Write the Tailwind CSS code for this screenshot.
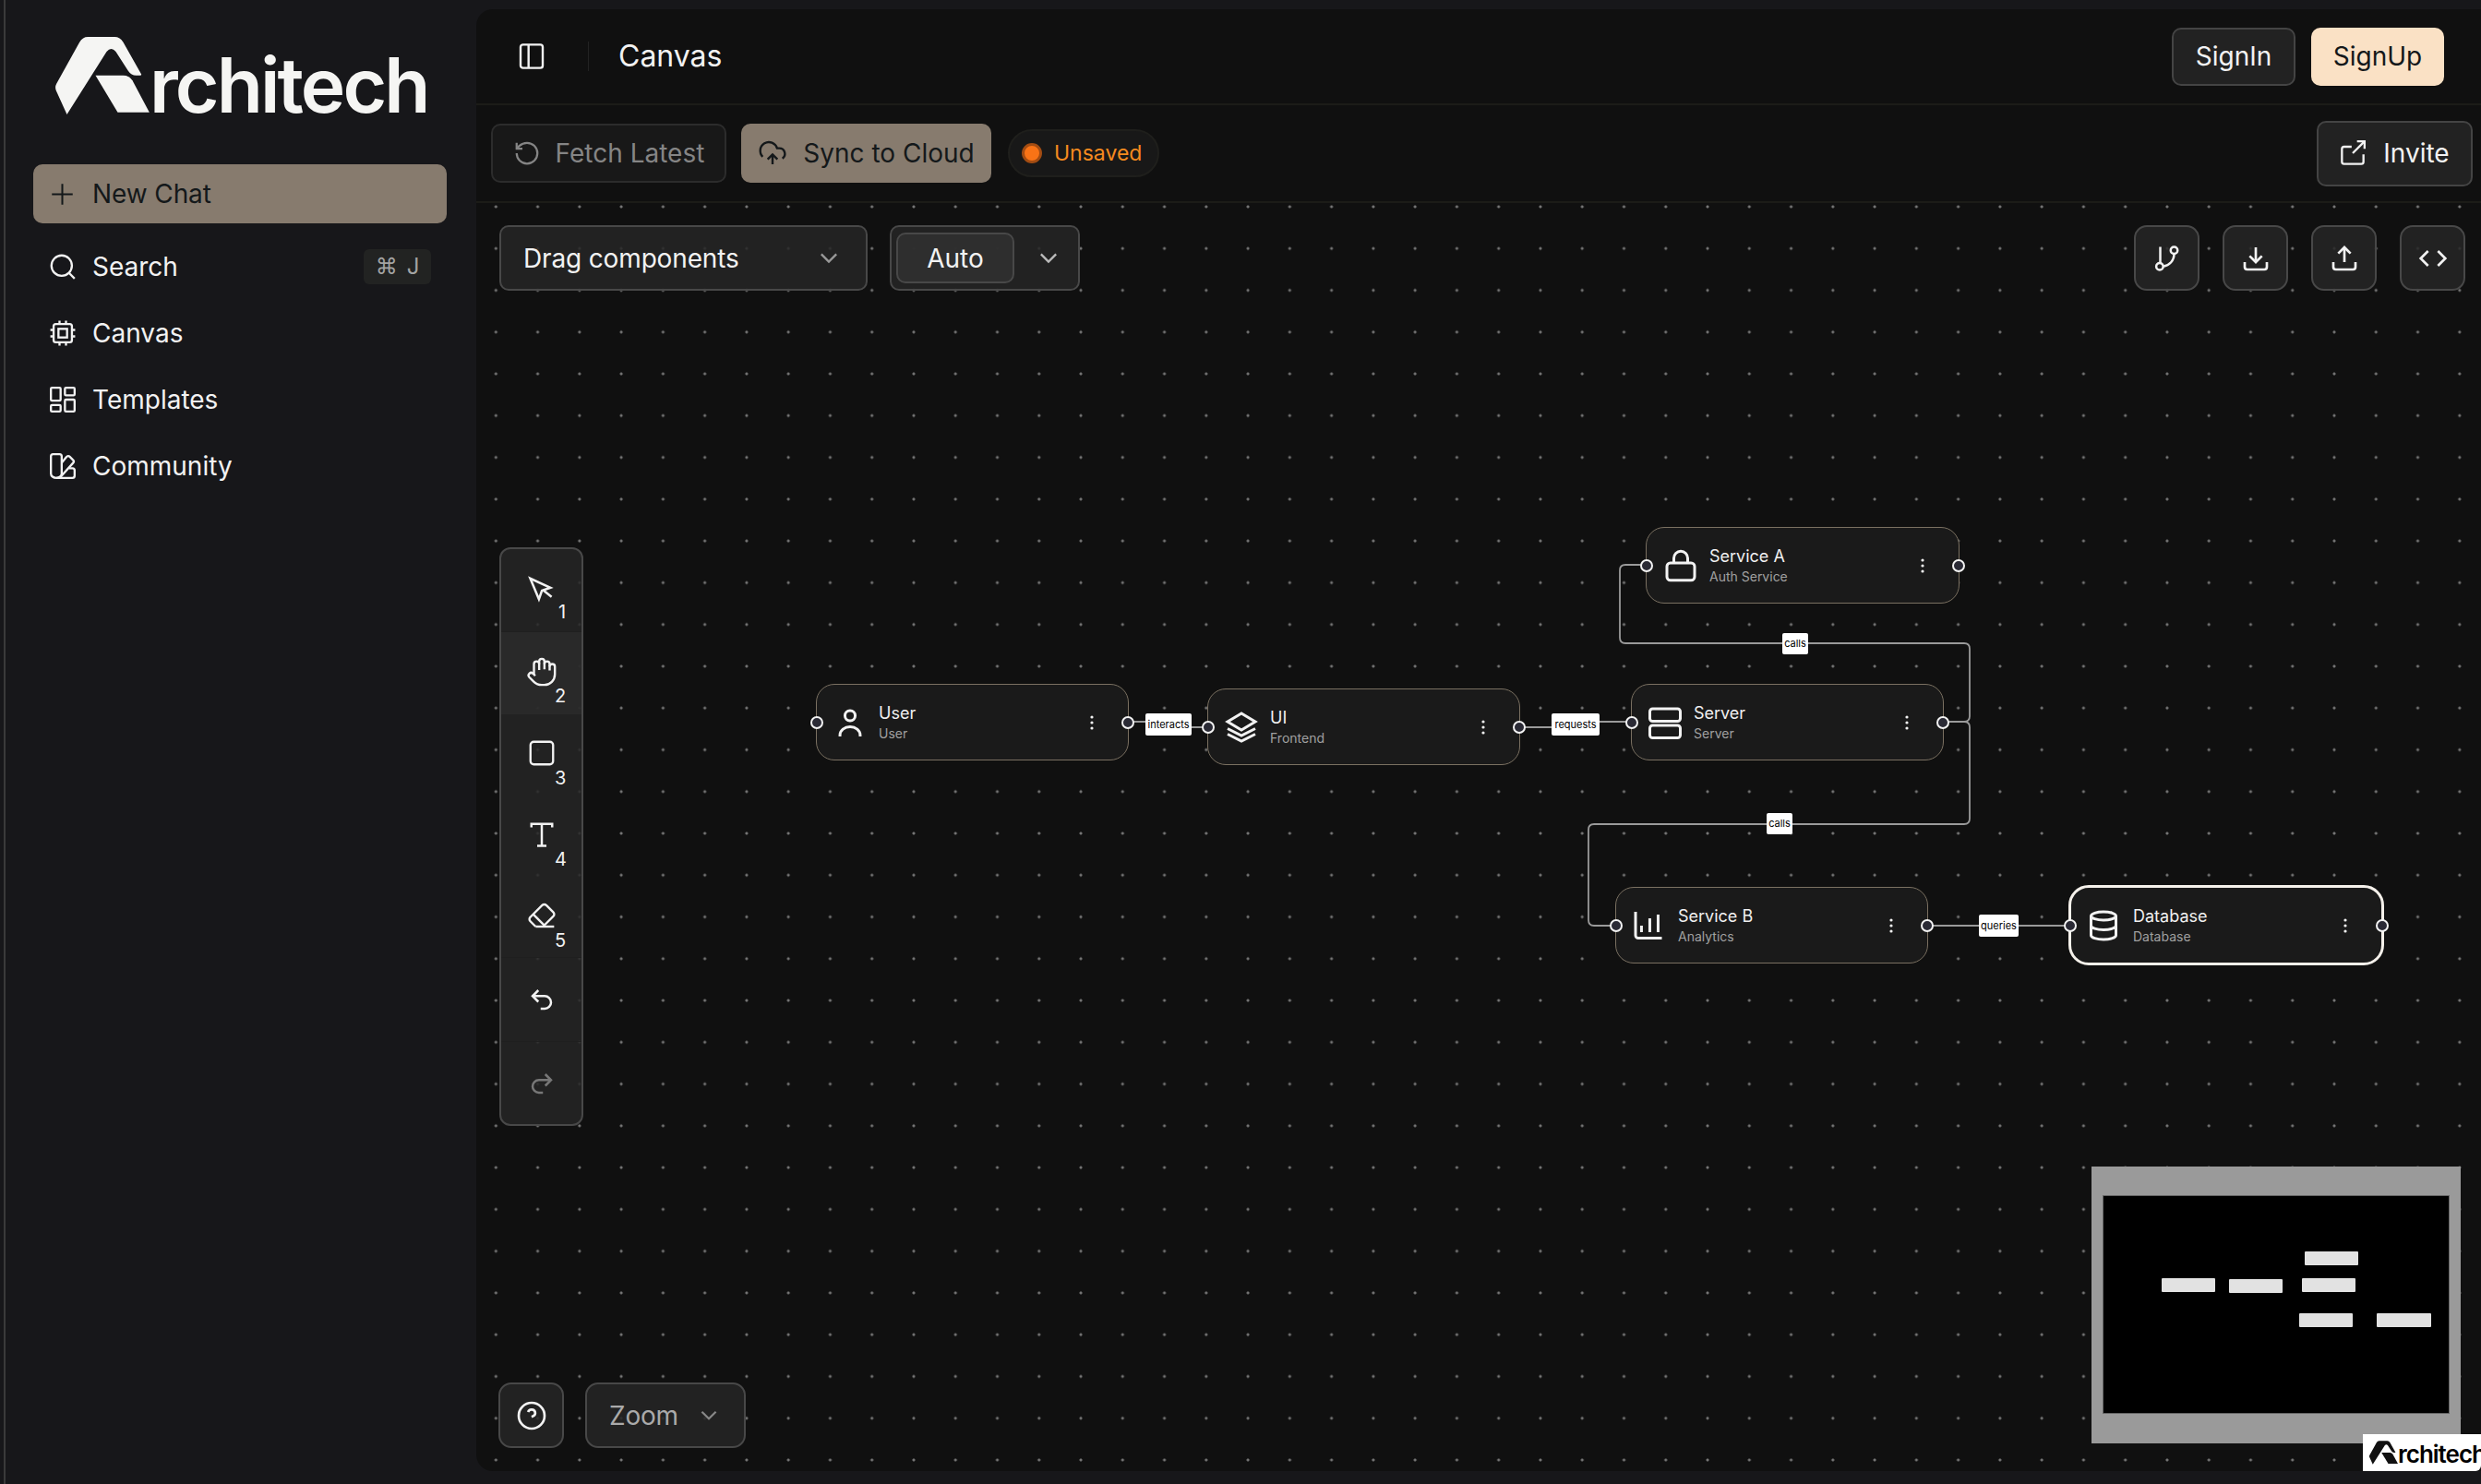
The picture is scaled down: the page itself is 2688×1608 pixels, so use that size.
<!DOCTYPE html>
<html>
<head>
<meta charset="utf-8">
<script src="https://cdn.jsdelivr.net/npm/@tailwindcss/browser@4"></script>
</head>
<body class="bg-[#17171a]">
<div class="flex w-[2688px] h-[1608px] overflow-hidden bg-[#17171a] font-[family-name:Inter]">
  <div class="w-[4px] shrink-0"></div>
  <div class="w-[2px] shrink-0 bg-[#3a3a3a]"></div>
  <!-- Sidebar -->
  <aside class="w-[510px] shrink-0 flex flex-col pl-[30px] pr-[32px] text-[#f2f2f2]">
    <div class="h-[178px] flex items-start pl-[24px] pt-[40px] shrink-0">
      <svg class="shrink-0" width="102" height="84" viewBox="30 30 305 252" fill="#f5f5f3"><path d="M67 282 L32 205 Q27 193 33 182 L108 47 Q118 30 135 30 H222 Q240 30 250 47 L308 150 Q311 155 305 155 H292 Q276 155 266 140 L226 78 Q211 60 196 78 Z"/><path d="M160 155 H250 Q270 155 280 172 L335 275 H232 Z"/></svg>
      <span class="text-[82px] leading-[82px] font-semibold tracking-[-2.9px] text-[#f5f5f3] mt-[12px]">rchitech</span>
    </div>
    <button class="h-[64px] flex items-center bg-[#877b6e] rounded-[10px] pl-[18px] gap-[19px] text-[#14181a] text-[28px] tracking-[-0.1px]">
      <svg class="w-[27px] h-[27px]" viewBox="0 0 24 24" fill="none" stroke="currentColor" stroke-width="1.8"><path d="M2 12h20M12 2v20"/></svg>
      New Chat
    </button>
    <nav class="flex flex-col mt-[11px]">
      <div class="h-[72px] flex items-center pl-[18px] gap-[18px] text-[28px]">
        <svg class="w-[28px] h-[28px]" viewBox="0 0 24 24" fill="none" stroke="currentColor" stroke-width="2"><circle cx="11" cy="11" r="9.500"/><path d="m23 23-5-5"/></svg>
        <span class="flex-1">Search</span>
        <span class="w-[73px] h-[38px] mr-[17px] rounded-[6px] bg-[#222322] text-[#a3a3a3] text-[24px] flex items-center justify-center gap-[10px] font-[family-name:'DejaVu_Sans']"><span>⌘</span><span class="font-[family-name:Inter]">J</span></span>
      </div>
      <div class="h-[72px] flex items-center pl-[18px] gap-[18px] text-[28px]">
        <svg class="w-[28px] h-[28px]" viewBox="0 0 24 24" fill="none" stroke="currentColor" stroke-width="2"><rect x="3.500" y="3.500" width="17" height="17" rx="2"/><rect x="8" y="8" width="8" height="8"/><path d="M15 0.500v2.500M15 21v2.500M0.500 15h2.500M0.500 9h2.500M21 15h2.500M21 9h2.500M9 0.500v2.500M9 21v2.500"/></svg>
        Canvas
      </div>
      <div class="h-[72px] flex items-center pl-[18px] gap-[18px] text-[28px]">
        <svg class="w-[28px] h-[28px]" viewBox="0 0 24 24" fill="none" stroke="currentColor" stroke-width="2"><rect x="1" y="1" width="9" height="12" rx="1"/><rect x="14" y="1" width="9" height="7" rx="1"/><rect x="14" y="12" width="9" height="11" rx="1"/><rect x="1" y="17" width="9" height="6" rx="1"/></svg>
        Templates
      </div>
      <div class="h-[72px] flex items-center pl-[18px] gap-[18px] text-[28px]">
        <svg class="w-[28px] h-[28px]" viewBox="0 0 24 24" fill="none" stroke="currentColor" stroke-width="2"><path d="M11 19a5 4 0 0 1-10 0V3a2 2 0 0 1 2-2h6a2 2 0 0 1 2 2Z"/><path d="M18 14h3a2 2 0 0 1 2 2v5a2 2 0 0 1-2 2H6"/><path d="m11 9 4.500-5.500a2 2 0 0 1 3-.2l3 3a2 2 0 0 1 .1 2.800L10 22"/><path d="M6 19h.01"/></svg>
        Community
      </div>
    </nav>
  </aside>

  <!-- Main -->
  <main class="flex-1 flex flex-col mt-[10px] mb-[14px] bg-[#101010] rounded-l-[18px] overflow-hidden text-[#f2f2f2]">
    <header class="h-[104px] shrink-0 border-b-2 border-[#1c1c18] flex items-center pl-[44px] pr-[40px]">
      <svg class="w-[32px] h-[32px]" viewBox="0 0 24 24" fill="none" stroke="currentColor" stroke-width="1.8"><rect x="3" y="2.500" width="18" height="19" rx="2"/><path d="M9.500 2.500v19"/></svg>
      <div class="w-[1px] h-[32px] bg-[#222] ml-[45px] mr-[32px]"></div>
      <span class="text-[32px] flex-1">Canvas</span>
      <button class="w-[134px] h-[63px] rounded-[10px] border-2 border-[#444] bg-[#222] text-[28px] mr-[17px]">SignIn</button>
      <button class="w-[144px] h-[63px] rounded-[10px] bg-[#fae1c5] text-[#14181a] text-[28px]">SignUp</button>
    </header>
    <div class="h-[106px] shrink-0 border-b-2 border-[#1c1c18] flex items-center pl-[16px] pr-[9px]">
      <button class="w-[255px] h-[64px] rounded-[10px] border-2 border-[#2c2c2c] bg-[#181818] text-[#858585] text-[28px] flex items-center justify-center gap-[16px]">
        <svg class="w-[30px] h-[30px]" viewBox="0 0 24 24" fill="none" stroke="currentColor" stroke-width="1.8"><path d="M3 12a9 9 0 1 0 9-9 9.750 9.750 0 0 0-6.740 2.740L3 8"/><path d="M3 3v5h5"/></svg>
        Fetch Latest
      </button>
      <button class="w-[271px] h-[64px] rounded-[10px] bg-[#877b6e] text-[#14181a] text-[28px] ml-[16px] flex items-center justify-center gap-[17px]">
        <svg class="w-[32px] h-[32px]" viewBox="0 0 24 24" fill="none" stroke="currentColor" stroke-width="1.8"><path d="M12 13v8"/><path d="M4 14.899A7 7 0 1 1 15.710 8h1.790a4.500 4.500 0 0 1 2.500 8.242"/><path d="m8 17 4-4 4 4"/></svg>
        Sync to Cloud
      </button>
      <div class="w-[164px] h-[52px] rounded-full border-2 border-[#1f1f1c] bg-[#181818] ml-[18px] flex items-center pl-[13px] gap-[13px] text-[#f58a1f] text-[23px]">
        <span class="w-[22px] h-[22px] rounded-full bg-[#f97316] border-[3px] border-[#a34c12]"></span>Unsaved
      </div>
      <div class="flex-1"></div>
      <button class="w-[169px] h-[71px] rounded-[10px] border-2 border-[#444] bg-[#222] text-[28px] flex items-center justify-center gap-[19px]">
        <svg class="w-[28px] h-[28px]" viewBox="0 0 24 24" fill="none" stroke="currentColor" stroke-width="2"><path d="M22 13v7a2 2 0 0 1-2 2H4a2 2 0 0 1-2-2V8a2 2 0 0 1 2-2h7"/><path d="m23 1-11 11"/><path d="M16 1h7v7"/></svg>
        Invite
      </button>
    </div>

    <section class="relative flex-1 bg-[radial-gradient(circle,#777_1.5px,transparent_1.6px)] bg-[size:45.28px_45.28px] bg-[position:-1.34px_-18.64px]">
      <!-- top-left controls -->
      <div class="absolute left-[25px] top-[24px] flex gap-[24px]">
        <button class="w-[399px] h-[71px] rounded-[10px] border-2 border-[#484848] bg-[#262626]/85 text-[28px] tracking-[-0.15px] flex items-center justify-between pl-[24px] pr-[26px]">
          Drag components
          <svg class="w-[28px] h-[28px] text-[#999]" viewBox="0 0 24 24" fill="none" stroke="currentColor" stroke-width="2"><path d="m5 8 7 7 7-7"/></svg>
        </button>
        <div class="w-[206px] h-[71px] rounded-[10px] border-2 border-[#484848] bg-[#262626]/85 flex items-center pl-[5px] pr-[18px] justify-between">
          <span class="w-[128px] h-[55px] rounded-[10px] border-2 border-[#484848] bg-[#303030]/85 text-[28px] flex items-center justify-center">Auto</span>
          <svg class="w-[28px] h-[28px] text-[#bbb]" viewBox="0 0 24 24" fill="none" stroke="currentColor" stroke-width="2"><path d="m5 8 7 7 7-7"/></svg>
        </div>
      </div>
      <!-- top-right tools -->
      <div class="absolute right-[17px] top-[24px] flex gap-[25px]">
        <button class="w-[71px] h-[71px] rounded-[14px] border-2 border-[#484848] bg-[#262626]/85 flex items-center justify-center">
          <svg class="w-[30px] h-[30px]" viewBox="0 0 24 24" fill="none" stroke="currentColor" stroke-width="2"><path d="M6 2v14"/><circle cx="18" cy="5" r="3"/><circle cx="5.500" cy="19" r="3"/><path d="M18 8c0 6-4 10-9.500 11"/></svg>
        </button>
        <button class="w-[71px] h-[71px] rounded-[14px] border-2 border-[#484848] bg-[#262626]/85 flex items-center justify-center">
          <svg class="w-[32px] h-[32px]" viewBox="0 0 24 24" fill="none" stroke="currentColor" stroke-width="2"><path d="M21 15v4a2 2 0 0 1-2 2H5a2 2 0 0 1-2-2v-4"/><path d="m7 10 5 5 5-5"/><path d="M12 15V3"/></svg>
        </button>
        <button class="w-[71px] h-[71px] rounded-[14px] border-2 border-[#484848] bg-[#262626]/85 flex items-center justify-center">
          <svg class="w-[32px] h-[32px]" viewBox="0 0 24 24" fill="none" stroke="currentColor" stroke-width="2"><path d="M21 15v4a2 2 0 0 1-2 2H5a2 2 0 0 1-2-2v-4"/><path d="m17 8-5-5-5 5"/><path d="M12 3v12"/></svg>
        </button>
        <button class="w-[71px] h-[71px] rounded-[14px] border-2 border-[#484848] bg-[#262626]/85 flex items-center justify-center">
          <svg class="w-[32px] h-[32px]" viewBox="0 0 24 24" fill="none" stroke="currentColor" stroke-width="2"><path d="m8 6-6 6 6 6"/><path d="m16 6 6 6-6 6"/></svg>
        </button>
      </div>
      <!-- left tool rail -->
      <div class="absolute left-[25px] top-[373px] w-[91px] h-[627px] rounded-[12px] border-2 border-[#484848] bg-[#262626]/85 flex flex-col overflow-hidden">
        <div class="relative h-[90px] flex items-center justify-center border-b border-[#1f1f1f] pb-[3px]">
          <svg class="w-[30px] h-[30px]" viewBox="0 0 24 24" fill="none" stroke="currentColor" stroke-width="2"><path d="M2 3l7.500 18 2.600-7.400L19.500 11z"/><path d="M13 13l7.500 6"/></svg>
          <span class="absolute left-[62px] top-[56px] text-[20px] leading-[24px]">1</span>
        </div>
        <div class="relative h-[89px] flex items-center justify-center bg-[#2c2c2c]/70 pb-[4px]">
          <svg class="w-[34px] h-[34px]" viewBox="0 0 24 24" fill="none" stroke="currentColor" stroke-width="1.700"><path d="M18 11V6a2 2 0 0 0-2-2a2 2 0 0 0-2 2"/><path d="M14 10V4a2 2 0 0 0-2-2a2 2 0 0 0-2 2v2"/><path d="M10 10.500V6a2 2 0 0 0-2-2a2 2 0 0 0-2 2v8"/><path d="M18 8a2 2 0 1 1 4 0v6a8 8 0 0 1-8 8h-2c-2.800 0-4.500-.860-5.990-2.340l-3.600-3.600a2 2 0 0 1 2.830-2.820L7 15"/></svg>
          <span class="absolute left-[58px] top-[57px] text-[20px] leading-[24px]">2</span>
        </div>
        <div class="relative h-[88px] flex items-center justify-center pb-[4px]">
          <svg class="w-[28px] h-[28px]" viewBox="0 0 24 24" fill="none" stroke="currentColor" stroke-width="2"><rect x="1.500" y="1.500" width="21" height="21" rx="3"/></svg>
          <span class="absolute left-[58px] top-[57px] text-[20px] leading-[24px]">3</span>
        </div>
        <div class="relative h-[88px] flex items-center justify-center pb-[4px]">
          <svg class="w-[30px] h-[30px]" viewBox="0 0 24 24" fill="none" stroke="currentColor" stroke-width="2"><path d="M3 6V3h18v3"/><path d="M8 22h8"/><path d="M12 3v19"/></svg>
          <span class="absolute left-[58px] top-[57px] text-[20px] leading-[24px]">4</span>
        </div>
        <div class="relative h-[88px] flex items-center justify-center pb-[4px] border-b border-[#1f1f1f]">
          <svg class="w-[32px] h-[32px]" viewBox="0 0 24 24" fill="none" stroke="currentColor" stroke-width="1.800"><path d="m7 21-4.300-4.300c-1-1-1-2.500 0-3.400l9.600-9.600c1-1 2.500-1 3.400 0l5.600 5.600c1 1 1 2.500 0 3.400L13 21"/><path d="M22 21H7"/><path d="m5 11 9 9"/></svg>
          <span class="absolute left-[58px] top-[57px] text-[20px] leading-[24px]">5</span>
        </div>
        <div class="h-[91px] flex items-center justify-center border-b border-[#1f1f1f]">
          <svg class="w-[30px] h-[30px]" viewBox="0 0 24 24" fill="none" stroke="currentColor" stroke-width="2"><path d="M9 14 4 9l5-5"/><path d="M4 9h10.500a5.500 5.500 0 0 1 5.500 5.500a5.500 5.500 0 0 1-5.500 5.500H11"/></svg>
        </div>
        <div class="flex-1 flex items-center justify-center">
          <svg class="w-[30px] h-[30px] text-[#777]" viewBox="0 0 24 24" fill="none" stroke="currentColor" stroke-width="2"><path d="m15 14 5-5-5-5"/><path d="M20 9H9.500A5.500 5.500 0 0 0 4 14.500A5.500 5.500 0 0 0 9.500 20H13"/></svg>
        </div>
      </div>
      <!-- bottom-left -->
      <div class="absolute left-[24px] bottom-[25px] flex gap-[23px]">
        <button class="w-[71px] h-[71px] rounded-[14px] border-2 border-[#484848] bg-[#262626]/85 flex items-center justify-center">
          <svg class="w-[32px] h-[32px]" viewBox="0 0 24 24" fill="none" stroke="currentColor" stroke-width="2"><circle cx="12" cy="12" r="10.500"/><path d="M9.090 9a3 3 0 0 1 5.830 1c0 2-3 3-3 3"/><path d="M12 17h.01"/></svg>
        </button>
        <button class="w-[174px] h-[71px] rounded-[14px] border-2 border-[#484848] bg-[#262626]/85 text-[#aaa] text-[28px] tracking-[-0.2px] flex items-center pl-[24px] gap-[20px]">
          Zoom
          <svg class="w-[26px] h-[26px] text-[#888]" viewBox="0 0 24 24" fill="none" stroke="currentColor" stroke-width="2"><path d="m5 8 7 7 7-7"/></svg>
        </button>
      </div>

      <!-- Edges -->
      <svg class="absolute left-0 top-0" width="2172" height="1374" fill="none" stroke="#9a9a9a" stroke-width="1.800">
        <path d="M706 562H750V568H793"/>
        <path d="M1130 568H1191V562H1252"/>
        <path d="M1589 562H1612Q1618 562 1618 556V483Q1618 477 1612 477H1245Q1239 477 1239 471V398Q1239 392 1245 392H1268"/>
        <path d="M1589 562H1612Q1618 562 1618 568V667Q1618 673 1612 673H1211Q1205 673 1205 679V777Q1205 783 1211 783H1234"/>
        <path d="M1572 783H1726"/>
      </svg>

      <!-- Edge labels -->
      <span class="absolute left-[725px] top-[553px] w-[50px] h-[24px] rounded-[2px] bg-white text-black text-[11px] flex items-center justify-center">interacts</span>
      <span class="absolute left-[1165px] top-[553px] w-[52px] h-[24px] rounded-[2px] bg-white text-black text-[11px] flex items-center justify-center">requests</span>
      <span class="absolute left-[1415px] top-[466px] w-[28px] h-[23px] rounded-[2px] bg-white text-black text-[11px] flex items-center justify-center">calls</span>
      <span class="absolute left-[1398px] top-[661px] w-[28px] h-[23px] rounded-[2px] bg-white text-black text-[11px] flex items-center justify-center">calls</span>
      <span class="absolute left-[1628px] top-[771px] w-[43px] h-[24px] rounded-[2px] bg-white text-black text-[11px] flex items-center justify-center">queries</span>

      <!-- Nodes -->
      <div class="absolute left-[368px] top-[521px] w-[339px] h-[83px] rounded-[20px] border-[1.5px] border-[#7a7061] bg-[#1a1a1a] flex items-center pl-[18px]">
        <span class="absolute -left-[7px] top-1/2 -translate-y-1/2 w-[14px] h-[14px] rounded-full bg-[#2a2a35] border-2 border-[#f2f2f2]"></span>
        <svg class="w-[36px] h-[36px] shrink-0" viewBox="0 0 24 24" fill="none" stroke="currentColor" stroke-width="2"><circle cx="12" cy="7" r="3.700"/><path d="M4.700 22v-1a7.300 6 0 0 1 14.600 0v1"/></svg>
        <div class="ml-[13px] flex flex-col flex-1"><span class="text-[18px] leading-[24px] text-[#f0f0f0]">User</span><span class="text-[14px] leading-[20px] text-[#a0a0a0]">User</span></div>
        <svg class="mr-[37px] w-[4px] h-[16px]" viewBox="0 0 4 16" fill="#f2f2f2"><circle cx="2" cy="2" r="1.600"/><circle cx="2" cy="8" r="1.600"/><circle cx="2" cy="14" r="1.600"/></svg>
        <span class="absolute -right-[7px] top-1/2 -translate-y-1/2 w-[14px] h-[14px] rounded-full bg-[#2a2a35] border-2 border-[#f2f2f2]"></span>
      </div>
      <div class="absolute left-[792px] top-[526px] w-[339px] h-[83px] rounded-[20px] border-[1.5px] border-[#7a7061] bg-[#1a1a1a] flex items-center pl-[18px]">
        <span class="absolute -left-[7px] top-1/2 -translate-y-1/2 w-[14px] h-[14px] rounded-full bg-[#2a2a35] border-2 border-[#f2f2f2]"></span>
        <svg class="w-[36px] h-[36px] shrink-0" viewBox="0 0 24 24" fill="none" stroke="currentColor" stroke-width="2"><path d="m12 2-10 6 10 6 10-6z"/><path d="m2 13 10 5 10-5"/><path d="m2 17 10 5 10-5"/></svg>
        <div class="ml-[13px] pt-[1px] flex flex-col flex-1"><span class="text-[18px] leading-[24px] text-[#f0f0f0]">UI</span><span class="text-[14px] leading-[20px] text-[#a0a0a0]">Frontend</span></div>
        <svg class="mr-[37px] w-[4px] h-[16px]" viewBox="0 0 4 16" fill="#f2f2f2"><circle cx="2" cy="2" r="1.600"/><circle cx="2" cy="8" r="1.600"/><circle cx="2" cy="14" r="1.600"/></svg>
        <span class="absolute -right-[7px] top-1/2 -translate-y-1/2 w-[14px] h-[14px] rounded-full bg-[#2a2a35] border-2 border-[#f2f2f2]"></span>
      </div>
      <div class="absolute left-[1251px] top-[521px] w-[339px] h-[83px] rounded-[20px] border-[1.5px] border-[#7a7061] bg-[#1a1a1a] flex items-center pl-[18px]">
        <span class="absolute -left-[7px] top-1/2 -translate-y-1/2 w-[14px] h-[14px] rounded-full bg-[#2a2a35] border-2 border-[#f2f2f2]"></span>
        <svg class="w-[36px] h-[36px] shrink-0" viewBox="0 0 24 24" fill="none" stroke="currentColor" stroke-width="2"><rect x="1" y="2" width="22" height="9" rx="2"/><rect x="1" y="14" width="22" height="9" rx="2"/><path d="M6 6.500h.01M6 18.500h.01"/></svg>
        <div class="ml-[13px] flex flex-col flex-1"><span class="text-[18px] leading-[24px] text-[#f0f0f0]">Server</span><span class="text-[14px] leading-[20px] text-[#a0a0a0]">Server</span></div>
        <svg class="mr-[37px] w-[4px] h-[16px]" viewBox="0 0 4 16" fill="#f2f2f2"><circle cx="2" cy="2" r="1.600"/><circle cx="2" cy="8" r="1.600"/><circle cx="2" cy="14" r="1.600"/></svg>
        <span class="absolute -right-[7px] top-1/2 -translate-y-1/2 w-[14px] h-[14px] rounded-full bg-[#2a2a35] border-2 border-[#f2f2f2]"></span>
      </div>
      <div class="absolute left-[1267px] top-[351px] w-[340px] h-[83px] rounded-[20px] border-[1.5px] border-[#7a7061] bg-[#1a1a1a] flex items-center pl-[19px]">
        <span class="absolute -left-[7px] top-1/2 -translate-y-1/2 w-[14px] h-[14px] rounded-full bg-[#2a2a35] border-2 border-[#f2f2f2]"></span>
        <svg class="w-[36px] h-[36px] shrink-0" viewBox="0 0 24 24" fill="none" stroke="currentColor" stroke-width="2"><rect x="2" y="10" width="20" height="12.500" rx="2.500"/><path d="M7 10V6.500a5 5 0 0 1 10 0V10"/></svg>
        <div class="ml-[13px] flex flex-col flex-1"><span class="text-[18px] leading-[24px] text-[#f0f0f0]">Service A</span><span class="text-[14px] leading-[20px] text-[#a0a0a0]">Auth Service</span></div>
        <svg class="mr-[37px] w-[4px] h-[16px]" viewBox="0 0 4 16" fill="#f2f2f2"><circle cx="2" cy="2" r="1.600"/><circle cx="2" cy="8" r="1.600"/><circle cx="2" cy="14" r="1.600"/></svg>
        <span class="absolute -right-[7px] top-1/2 -translate-y-1/2 w-[14px] h-[14px] rounded-full bg-[#2a2a35] border-2 border-[#f2f2f2]"></span>
      </div>
      <div class="absolute left-[1234px] top-[741px] w-[339px] h-[83px] rounded-[20px] border-[1.5px] border-[#7a7061] bg-[#1a1a1a] flex items-center pl-[18px]">
        <span class="absolute -left-[7px] top-1/2 -translate-y-1/2 w-[14px] h-[14px] rounded-full bg-[#2a2a35] border-2 border-[#f2f2f2]"></span>
        <svg class="w-[36px] h-[36px] shrink-0" viewBox="0 0 24 24" fill="none" stroke="currentColor" stroke-width="2"><path d="M2 2v17a2 2 0 0 0 2 2h17"/><path d="M6.300 16.700V12"/><path d="M12.300 16.700V6.700"/><path d="M18.300 16.700V4"/></svg>
        <div class="ml-[13px] pt-[1px] flex flex-col flex-1"><span class="text-[18px] leading-[24px] text-[#f0f0f0]">Service B</span><span class="text-[14px] leading-[20px] text-[#a0a0a0]">Analytics</span></div>
        <svg class="mr-[37px] w-[4px] h-[16px]" viewBox="0 0 4 16" fill="#f2f2f2"><circle cx="2" cy="2" r="1.600"/><circle cx="2" cy="8" r="1.600"/><circle cx="2" cy="14" r="1.600"/></svg>
        <span class="absolute -right-[7px] top-1/2 -translate-y-1/2 w-[14px] h-[14px] rounded-full bg-[#2a2a35] border-2 border-[#f2f2f2]"></span>
      </div>
      <div class="absolute left-[1725px] top-[739px] w-[342px] h-[87px] rounded-[22px] border-[3px] border-[#f4f0ea] bg-[#1a1a1a] flex items-center pl-[17px]">
        <span class="absolute -left-[8px] top-1/2 -translate-y-1/2 w-[14px] h-[14px] rounded-full bg-[#2a2a35] border-2 border-[#f2f2f2]"></span>
        <svg class="w-[36px] h-[36px] shrink-0" viewBox="0 0 24 24" fill="none" stroke="currentColor" stroke-width="2"><ellipse cx="12" cy="5" rx="9" ry="3"/><path d="M3 5V19A9 3 0 0 0 21 19V5"/><path d="M3 12A9 3 0 0 0 21 12"/></svg>
        <div class="ml-[14px] pt-[1px] flex flex-col flex-1"><span class="text-[18px] leading-[24px] text-[#f0f0f0]">Database</span><span class="text-[14px] leading-[20px] text-[#a0a0a0]">Database</span></div>
        <svg class="mr-[37px] w-[4px] h-[16px]" viewBox="0 0 4 16" fill="#f2f2f2"><circle cx="2" cy="2" r="1.600"/><circle cx="2" cy="8" r="1.600"/><circle cx="2" cy="14" r="1.600"/></svg>
        <span class="absolute -right-[8px] top-1/2 -translate-y-1/2 w-[14px] h-[14px] rounded-full bg-[#2a2a35] border-2 border-[#f2f2f2]"></span>
      </div>

      <!-- Minimap -->
      <div class="absolute left-[1750px] top-[1044px] w-[400px] h-[300px] bg-[#9a9a9a] pt-[31px] px-[12px]">
        <div class="relative h-[237px] bg-black border border-[#666]">
          <span class="absolute left-[63px] top-[89px] w-[58px] h-[15px] rounded-[1px] bg-[#e2e2e2]"></span>
          <span class="absolute left-[136px] top-[90px] w-[58px] h-[15px] rounded-[1px] bg-[#e2e2e2]"></span>
          <span class="absolute left-[218px] top-[60px] w-[58px] h-[15px] rounded-[1px] bg-[#e2e2e2]"></span>
          <span class="absolute left-[215px] top-[89px] w-[58px] h-[15px] rounded-[1px] bg-[#e2e2e2]"></span>
          <span class="absolute left-[212px] top-[127px] w-[58px] h-[15px] rounded-[1px] bg-[#e2e2e2]"></span>
          <span class="absolute left-[296px] top-[127px] w-[59px] h-[15px] rounded-[1px] bg-[#e2e2e2]"></span>
        </div>
      </div>
      <!-- Attribution -->
      <div class="absolute right-0 bottom-0 w-[128px] h-[40px] bg-white overflow-hidden flex items-center pl-[7px] text-black rounded-br-[6px]">
        <svg class="shrink-0" width="31" height="26" viewBox="30 30 305 252" fill="#111"><path d="M67 282 L32 205 Q27 193 33 182 L108 47 Q118 30 135 30 H222 Q240 30 250 47 L308 150 Q311 155 305 155 H292 Q276 155 266 140 L226 78 Q211 60 196 78 Z"/><path d="M160 155 H250 Q270 155 280 172 L335 275 H232 Z"/></svg>
        <span class="text-[26px] leading-[26px] font-semibold tracking-[-1px] whitespace-nowrap mt-[3px]">rchitech</span>
      </div>
    </section>
  </main>
</div>
</body>
</html>
